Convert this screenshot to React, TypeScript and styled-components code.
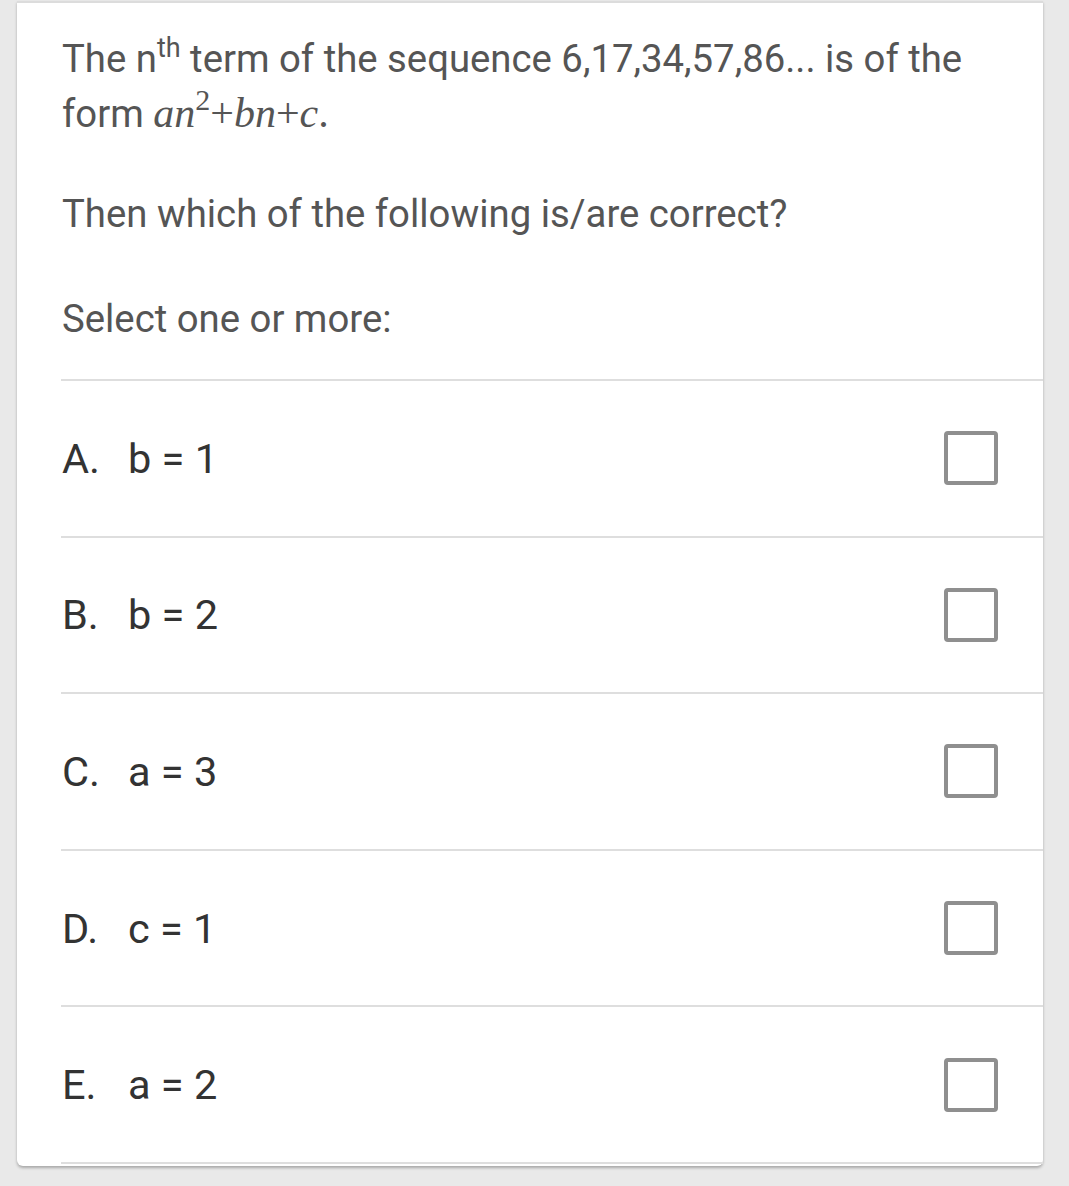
import React from "react";
import styled, { createGlobalStyle } from "styled-components";

const Global = createGlobalStyle`
  html, body { margin: 0; padding: 0; background: #e9e9e9; }
  body { font-family: Roboto, "Noto Sans", sans-serif; }
`;

const Page = styled.div`
  padding: 3px 26px 20px 17px;
  width: 1069px;
  box-sizing: border-box;
`;

const Card = styled.div`
  background: #fff;
  border-radius: 0 0 6px 6px;
  box-shadow: 0 2px 3px rgba(0, 0, 0, 0.28);
  padding: 29px 0 2px 44px;
  border-top: 2px solid #dcdcdc;
  margin-top: -2px;
`;

const Para = styled.p<{ $gap?: number }>`
  margin: 0 40px ${(p) => p.$gap ?? 0}px 1px;
  font-size: 38.3px;
  line-height: 54px;
  color: #555;
`;

const Sup = styled.sup`
  font-size: 27px;
  line-height: 0;
  vertical-align: 15px;
`;

const Math = styled.span`
  font-family: "Liberation Serif", "DejaVu Serif", serif;
  font-size: 42px;
`;

const MI = styled.i`
  font-style: italic;
`;

const MSup = styled.sup`
  font-size: 30px;
  line-height: 0;
  vertical-align: 17px;
`;

const Options = styled.div`
  margin-top: 33px;
  border-top: 2px solid #dedede;
`;

const Row = styled.label`
  display: flex;
  align-items: center;
  height: 154.6px;
  border-bottom: 2px solid #dedede;
  padding: 0 45px 0 1px;
  color: #333;
  font-size: 41.5px;
`;

const Letter = styled.span`
  width: 66px;
  flex: none;
`;

const Text = styled.span`
  flex: 1;
`;

const Box = styled.span`
  width: 46px;
  height: 46px;
  border: 4px solid #8f8f8f;
  border-radius: 4px;
  flex: none;
`;

const options = [
  ["A.", "b = 1"],
  ["B.", "b = 2"],
  ["C.", "a = 3"],
  ["D.", "c = 1"],
  ["E.", "a = 2"],
];

export default function App() {
  return (
    <>
      <Global />
      <Page>
        <Card>
          <Para $gap={46}>
            The n<Sup>th</Sup> term of the sequence 6,17,34,57,86... is of the
            form{" "}
            <Math>
              <MI>an</MI>
              <MSup>2</MSup>+<MI>bn</MI>+<MI>c</MI>.
            </Math>
          </Para>
          <Para $gap={51}>Then which of the following is/are correct?</Para>
          <Para>Select one or more:</Para>
          <Options>
            {options.map(([l, t]) => (
              <Row key={l}>
                <Letter>{l}</Letter>
                <Text>{t}</Text>
                <Box />
              </Row>
            ))}
          </Options>
        </Card>
      </Page>
    </>
  );
}
